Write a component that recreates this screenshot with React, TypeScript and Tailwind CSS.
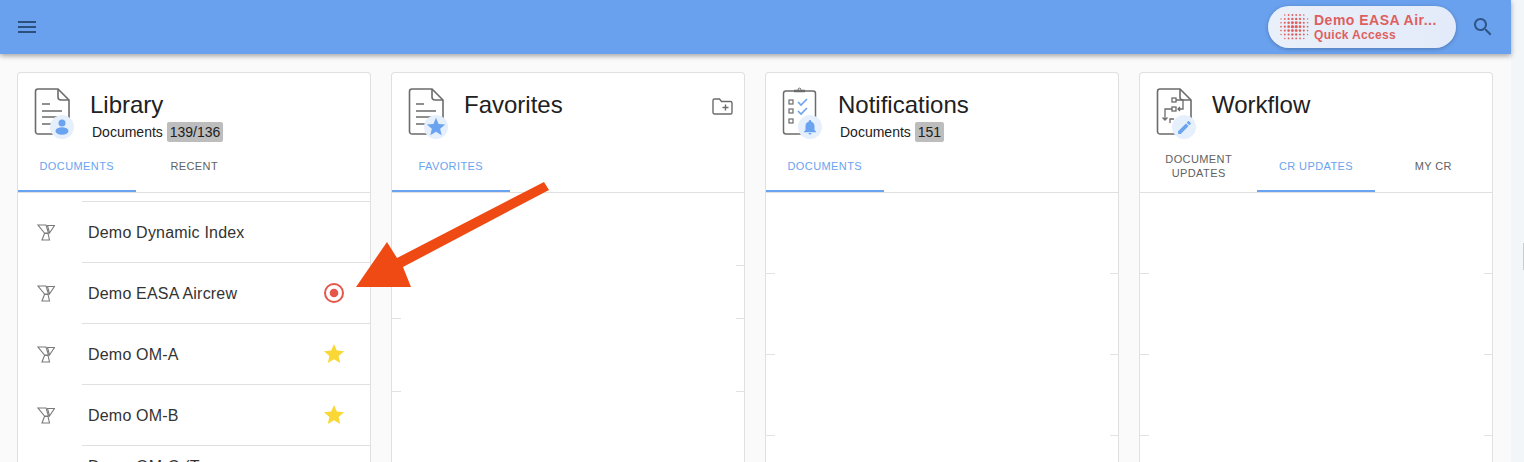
import React from 'react';

const BLUE = '#6aa3ef';

function DocIcon() {
    return (
        <svg width="38" height="48" viewBox="0 0 38 48" fill="none" stroke="#6b6b6b" strokeWidth="1.6">
            <path d="M4 2h20l11 11v31.500a2.500 2.500 0 0 1-2.500 2.500H4A2.500 2.500 0 0 1 1.500 44.500V4.500A2.500 2.500 0 0 1 4 2z" />
            <path d="M24 2v8a3 3 0 0 0 3 3h8" />
            <path d="M8 17h8M8 24h20M8 30h20M8 37h10" />
        </svg>
    );
}

function ClipboardIcon() {
    return (
        <svg width="38" height="48" viewBox="0 0 38 48" fill="none" stroke="#6b6b6b" strokeWidth="1.5">
            <rect x="1.500" y="4" width="32" height="43" rx="2.500" />
            <path d="M12 4h11" strokeWidth="2.500" />
            <circle cx="17.500" cy="2.500" r="1.400" strokeWidth="1" />
            <rect x="7" y="13" width="4" height="4" strokeWidth="1.200" />
            <rect x="7" y="22" width="4" height="4" strokeWidth="1.200" />
            <rect x="7" y="32" width="4" height="4" strokeWidth="1.200" />
            <path d="M16 15l3 3 6-6M16 24l3 3 6-6" stroke={BLUE} strokeWidth="1.600" />
        </svg>
    );
}

function FlowDocIcon() {
    return (
        <svg width="38" height="48" viewBox="0 0 38 48" fill="none" stroke="#6b6b6b" strokeWidth="1.6">
            <path d="M4 2h20l11 11v31.500a2.500 2.500 0 0 1-2.500 2.500H4A2.500 2.500 0 0 1 1.500 44.500V4.500A2.500 2.500 0 0 1 4 2z" />
            <path d="M24 2v8a3 3 0 0 0 3 3h8" />
            <g strokeWidth="1.300">
                <rect x="16" y="11" width="4" height="4" />
                <rect x="16" y="20" width="4" height="4" />
                <path d="M20 13h7v9h-5M24 20l-2 2 2 2" />
                <path d="M16 22H9v11M6.500 30.500L9 33l2.500-2.500M14 36v-4h4" />
            </g>
        </svg>
    );
}

function PersonBadge() {
    return (
        <svg width="18" height="18" viewBox="0 0 18 18" fill={BLUE}>
            <circle cx="9" cy="5" r="3.500" />
            <ellipse cx="9" cy="13" rx="6.500" ry="3.800" />
        </svg>
    );
}

function StarBadge() {
    return (
        <svg width="22" height="22" viewBox="0 0 24 24" fill={BLUE}>
            <path d="M12 17.270L18.180 21l-1.640-7.030L22 9.240l-7.190-.610L12 2 9.190 8.630 2 9.240l5.460 4.730L5.820 21z" />
        </svg>
    );
}

function BellBadge() {
    return (
        <svg width="18" height="18" viewBox="0 0 24 24" fill={BLUE}>
            <path d="M12 22c1.100 0 2-.900 2-2h-4c0 1.100.900 2 2 2zm6-6v-5c0-3.070-1.630-5.640-4.500-6.320V4c0-.830-.670-1.500-1.500-1.500s-1.500.670-1.500 1.500v.680C7.640 5.360 6 7.920 6 11v5l-2 2v1h16v-1l-2-2z" />
        </svg>
    );
}

function PencilBadge() {
    return (
        <svg width="17" height="17" viewBox="0 0 24 24" fill={BLUE}>
            <path d="M3 17.250V21h3.750L17.810 9.940l-3.750-3.750L3 17.250zM20.710 7.040c.390-.390.390-1.020 0-1.410l-2.340-2.340c-.390-.390-1.020-.390-1.410 0l-1.830 1.830 3.750 3.750 1.830-1.830z" />
        </svg>
    );
}

function BookLogo() {
    return (
        <svg width="18" height="17" viewBox="0 0 18 17" fill="none" stroke="#7a7a7a" strokeWidth="1.100">
            <path d="M1 1h8l2.500 8H7.500z" />
            <path d="M7.500 9.500L5 16h7.500l-1.500-6.500z" />
            <path d="M10.500 1.500h7L12.500 9z" />
        </svg>
    );
}

function DotMatrix() {
    const dots = [];
    for (let r = 0; r < 7; r++) {
        for (let c = 0; c < 8; c++) {
            const dx = c - 3.5;
            const dy = r - 3;
            const d = Math.sqrt(dx * dx + dy * dy);
            if (d > 4.1) continue;
            dots.push(<circle key={`${r}-${c}`} cx={2 + c * 3.800} cy={2 + r * 3.900} r={Math.max(0.700, 1.750 - d * 0.260)} />);
        }
    }
    return (
        <svg width="31" height="28" viewBox="0 0 31 28" fill="#de5f5f">
            {dots}
        </svg>
    );
}

function Ticks({ rows }: { rows: [number, boolean][] }) {
    return (
        <div className="flex flex-col">
            {rows.map(([h, left], i) => (
                <div key={i} className="flex items-end justify-between" style={{ height: h }}>
                    <div className={`h-px w-[9px] ${left ? 'bg-[#e2e2e2]' : ''}`} />
                    <div className="h-px w-[8px] bg-[#e2e2e2]" />
                </div>
            ))}
        </div>
    );
}

type CardProps = {
    title: string;
    count?: string;
    icon: React.ReactNode;
    badge: React.ReactNode;
    tabs: string[];
    active: number;
    action?: React.ReactNode;
    children?: React.ReactNode;
};

function Card({ title, count, icon, badge, tabs, active, action, children }: CardProps) {
    return (
        <section className="w-[354px] shrink-0 rounded-t-[4px] border border-b-0 border-[#e0e0e0] bg-white">
            <div className="flex h-[68px]">
                <div className="relative ml-4 mt-[14px] h-[48px] w-[56px] shrink-0">
                    {icon}
                    <div className="absolute left-[16px] top-[28px] flex h-6 w-6 items-center justify-center rounded-full bg-[#e6f0fc]">
                        {badge}
                    </div>
                </div>
                <div className="min-w-0 flex-1 pt-[17px]">
                    <h2 className="text-[24px] leading-[30px] text-[#212121]">{title}</h2>
                    {count && (
                        <p className="ml-0.5 mt-[3px] text-[14px] leading-[19px] text-[#212121]">
                            Documents <span className="rounded-[2px] bg-[#bdbdbd] px-[3px] py-[2px]">{count}</span>
                        </p>
                    )}
                </div>
                {action}
            </div>
            <div className="flex h-[52px] border-b border-[#e0e0e0]">
                {tabs.map((tab, i) => (
                    <div
                        key={tab}
                        className={`flex h-[51px] w-[117.500px] items-center justify-center border-b-2 px-4 text-center text-[11px] uppercase leading-[14px] tracking-[0.4px] ${
                            i === active ? 'border-[#6aa3ef] text-[#6aa3ef]' : 'border-transparent text-[#616161]'
                        }`}
                    >
                        {tab}
                    </div>
                ))}
            </div>
            {children}
        </section>
    );
}

const docs: { name: React.ReactNode; mark?: 'target' | 'star' }[] = [
    { name: 'Demo Dynamic Index' },
    { name: 'Demo EASA Aircrew', mark: 'target' },
    { name: 'Demo OM-A', mark: 'star' },
    { name: 'Demo OM-B', mark: 'star' },
    { name: <>Demo OM-C (Type<br />Rating)</> },
];

export default function App() {
    return (
        <div className="relative flex h-[462px] w-[1524px] overflow-hidden bg-[#f3f6f8] font-['Liberation_Sans',Arial,sans-serif]">
            <div className="h-full w-[1511px] shrink-0 bg-[#fafafa]">
                <header className="relative z-10 flex h-[54px] items-center bg-[#6aa1ee] shadow-[0_2px_5px_rgba(0,0,0,0.35)]">
                    <svg className="ml-[15px]" width="24" height="24" viewBox="0 0 24 24" fill="#2c4f7c">
                        <path d="M3 18h18v-2H3v2zm0-5h18v-2H3v2zm0-7v2h18V6H3z" />
                    </svg>
                    <div className="ml-auto flex h-[42px] w-[188px] items-center rounded-full bg-gradient-to-r from-[#eaf0f9] to-[#e3ebfa] pl-[11px] shadow-[0_1px_4px_rgba(0,0,0,0.25)]">
                        <DotMatrix />
                        <div className="ml-[4px] font-bold text-[#de5f5f]">
                            <div className="text-[14px] leading-[15px] tracking-[0.5px]">Demo EASA Air...</div>
                            <div className="text-[12px] leading-[14px] tracking-[0.3px]">Quick Access</div>
                        </div>
                    </div>
                    <svg className="ml-[15px] mr-[16px]" width="24" height="24" viewBox="0 0 24 24" fill="#2f5587">
                        <path d="M15.500 14h-.790l-.280-.270C15.410 12.590 16 11.110 16 9.500 16 5.910 13.090 3 9.500 3S3 5.910 3 9.500 5.910 16 9.500 16c1.610 0 3.090-.590 4.230-1.570l.270.280v.790l5 4.990L20.490 19l-4.990-5zm-6 0C7.010 14 5 11.990 5 9.500S7.010 5 9.500 5 14 7.010 14 9.500 11.990 14 9.500 14z" />
                    </svg>
                </header>
                <main className="ml-[17px] mt-[18px] flex h-[390px] gap-[20px]">
                    <Card title="Library" count="139/136" icon={<DocIcon />} badge={<PersonBadge />} tabs={['Documents', 'Recent']} active={0}>
                        <div className="ml-[64px] mt-2 border-t border-[#e0e0e0]">
                            {docs.map((doc, i) => (
                                <div key={i} className="relative flex h-[61px] items-center justify-between border-b border-[#e0e0e0] pl-[6px] pr-[25px]">
                                    <div className="absolute left-[-45px] top-[22px]">
                                        <BookLogo />
                                    </div>
                                    <span className="pt-[2px] text-[16px] leading-[20px] tracking-[0.2px] text-[#333333]">{doc.name}</span>
                                    {doc.mark === 'target' && (
                                        <svg width="22" height="22" viewBox="0 0 22 22" fill="none">
                                            <circle cx="11" cy="11" r="9" stroke="#e5574b" strokeWidth="2" />
                                            <circle cx="11" cy="11" r="4.300" fill="#e5574b" />
                                        </svg>
                                    )}
                                    {doc.mark === 'star' && (
                                        <svg width="22" height="22" viewBox="0 0 24 24" fill="#f9d835" className="scale-110">
                                            <path d="M12 17.270L18.180 21l-1.640-7.030L22 9.240l-7.190-.610L12 2 9.190 8.630 2 9.240l5.460 4.730L5.820 21z" />
                                        </svg>
                                    )}
                                </div>
                            ))}
                        </div>
                    </Card>
                    <Card
                        title="Favorites"
                        icon={<DocIcon />}
                        badge={<StarBadge />}
                        tabs={['Favorites']}
                        active={0}
                        action={
                            <svg className="mr-[11px] mt-[25px]" width="21" height="17" viewBox="0 0 21 17" fill="none" stroke="#6b6b6b" strokeWidth="1.400">
                                <path d="M2.500 1h5l2 2.500h9a1.500 1.500 0 0 1 1.500 1.500v9.500a1.500 1.500 0 0 1-1.500 1.500h-16A1.500 1.500 0 0 1 1 14.500v-12A1.500 1.500 0 0 1 2.500 1z" />
                                <path d="M13.500 6.500v6M10.500 9.500h6" />
                            </svg>
                        }
                    >
                        <Ticks rows={[[73, false], [53, true], [73, true]]} />
                    </Card>
                    <Card title="Notifications" count="151" icon={<ClipboardIcon />} badge={<BellBadge />} tabs={['Documents']} active={0}>
                        <Ticks rows={[[81, true], [81, true], [81, true]]} />
                    </Card>
                    <Card title="Workflow" icon={<FlowDocIcon />} badge={<PencilBadge />} tabs={['Document Updates', 'CR Updates', 'My CR']} active={1}>
                        <Ticks rows={[[81, true], [81, true], [81, true]]} />
                    </Card>
                </main>
            </div>
            <div className="mt-[243px] ml-auto h-[27px] w-px bg-[#c9cdd0]" />
            <svg className="absolute left-0 top-0 z-20" width="1524" height="462" viewBox="0 0 1524 462" fill="#f04a14">
                <path d="M544 182L549 190L403 267L411 287H356L387 242L397 258Z" />
            </svg>
        </div>
    );
}
